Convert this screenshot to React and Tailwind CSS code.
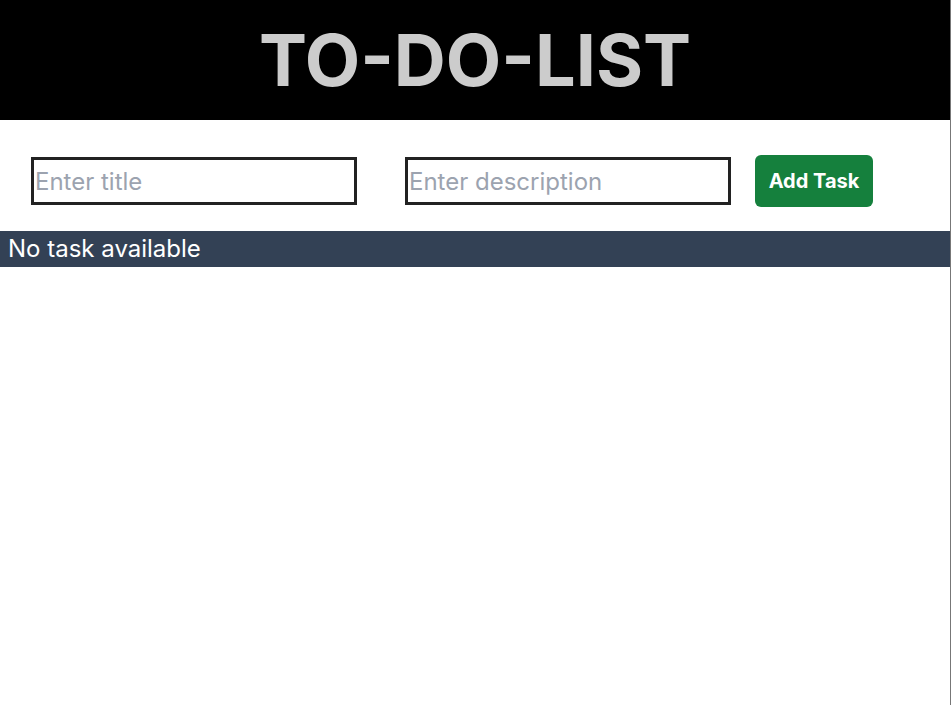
export default function App() {
  return (
    <div className="w-[951px] min-h-[705px] border-r border-[#777] bg-white" style={{ fontFamily: 'Inter, "Liberation Sans", sans-serif' }}>
      <header className="h-[120px] bg-black flex items-center justify-center">
        <h1 className="text-[72px] font-bold text-[#cccccc] leading-none">TO-DO-LIST</h1>
      </header>
      <div className="flex items-center pl-[31px] pt-[35px] pb-[24px]">
        <input
          placeholder="Enter title"
          className="w-[326px] h-[48px] border-[3px] border-[#222] px-[1px] text-[24px] text-black placeholder:text-[#9ca3af] outline-none"
        />
        <input
          placeholder="Enter description"
          className="ml-[48px] w-[326px] h-[48px] border-[3px] border-[#222] px-[1px] text-[24px] text-black placeholder:text-[#9ca3af] outline-none"
        />
        <button className="ml-[24px] w-[118px] h-[52px] rounded-md bg-[#15803d] text-white text-[20px] font-bold">
          Add Task
        </button>
      </div>
      <div className="h-[36px] bg-[#334155] flex items-center px-2 text-white text-[24px]">
        No task available
      </div>
    </div>
  );
}
